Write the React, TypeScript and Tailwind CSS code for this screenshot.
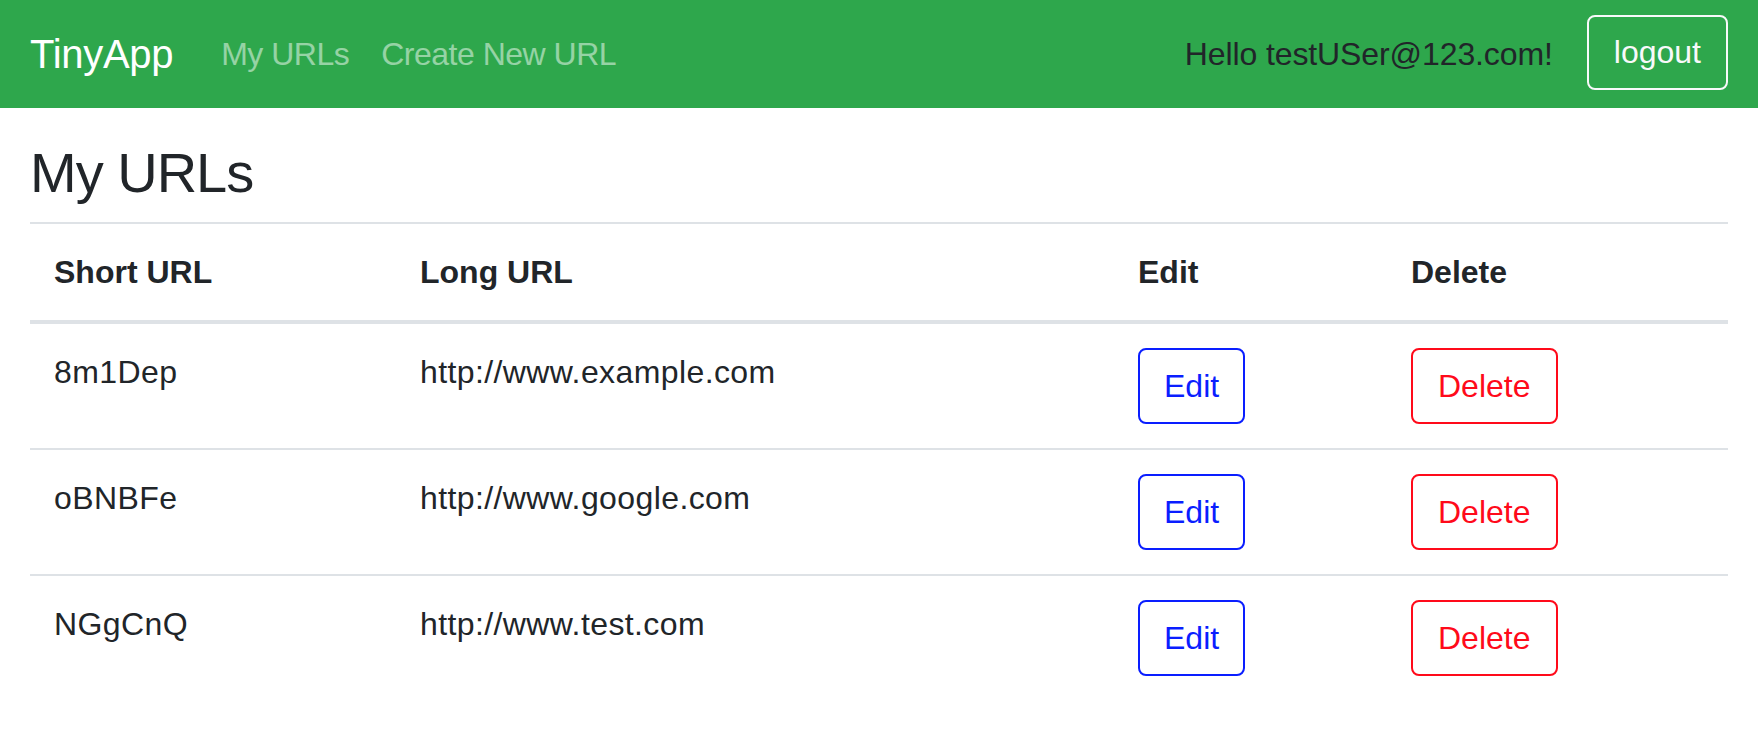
import React from 'react'

const urls = [
  { id: '8m1Dep', long: 'http://www.example.com' },
  { id: 'oBNBFe', long: 'http://www.google.com' },
  { id: 'NGgCnQ', long: 'http://www.test.com' },
]

// top bar with brand, links and the user box
function NavBar() {
  return (
    <nav className="flex h-[108px] items-center bg-[#2ea74c] px-[30px]">
      <a href="#" className="mr-[32px] text-[40px] leading-none tracking-[-0.3px] text-white">
        TinyApp
      </a>
      <div className="flex">
        <a href="#" className="px-[16px] text-[32px] tracking-[-0.5px] text-white/50">
          My URLs
        </a>
        <a href="#" className="px-[16px] text-[32px] tracking-[-0.5px] text-white/50">
          Create New URL
        </a>
      </div>
      <div className="ml-auto flex items-center">
        <span className="mr-[34px] text-[32px] tracking-[-0.1px] text-[#212529]">Hello testUSer@123.com!</span>
        <button className="mb-[4px] h-[75px] rounded-lg border-2 border-[#f8f9fa] px-[25px] text-[32px] leading-[48px] text-[#f8f9fa]">
          logout
        </button>
      </div>
    </nav>
  )
}

export default function App() {
  return (
    <div className="min-h-screen bg-white text-[#212529]" style={{ fontFamily: '"Liberation Sans", Arial, sans-serif' }}>
      <NavBar />

      <main className="px-[30px]">
        <h3 className="mt-[31px] mb-[16px] text-[56px] font-medium leading-[1.2] tracking-[-1px]">My URLs</h3>

        <table className="w-full table-fixed border-collapse text-[32px] leading-[48px]">
          <thead>
            <tr className="border-t-2 border-b-4 border-[#dee2e6]">
              <th className="w-[366px] p-[24px] text-left font-bold">Short URL</th>
              <th className="w-[718px] p-[24px] text-left font-bold">Long URL</th>
              <th className="w-[273px] p-[24px] text-left font-bold">Edit</th>
              <th className="p-[24px] text-left font-bold">Delete</th>
            </tr>
          </thead>
          <tbody>
            {urls.map((u, i) => (
              <tr key={u.id} className={i > 0 ? 'border-t-2 border-[#dee2e6]' : ''}>
                <td className="p-[24px] align-top tracking-[0.4px]">{u.id}</td>
                <td className="p-[24px] align-top tracking-[0.4px]">{u.long}</td>
                <td className="p-[24px] align-top">
                  <button className="h-[76px] rounded-lg border-2 border-[#0a1eff] px-[24px] leading-[48px] text-[#0a1eff]">
                    Edit
                  </button>
                </td>
                <td className="p-[24px] align-top">
                  <button className="h-[76px] rounded-lg border-2 border-[#ff0a1a] px-[25px] leading-[48px] text-[#ff0a1a]">
                    Delete
                  </button>
                </td>
              </tr>
            ))}
          </tbody>
        </table>
      </main>
    </div>
  )
}
